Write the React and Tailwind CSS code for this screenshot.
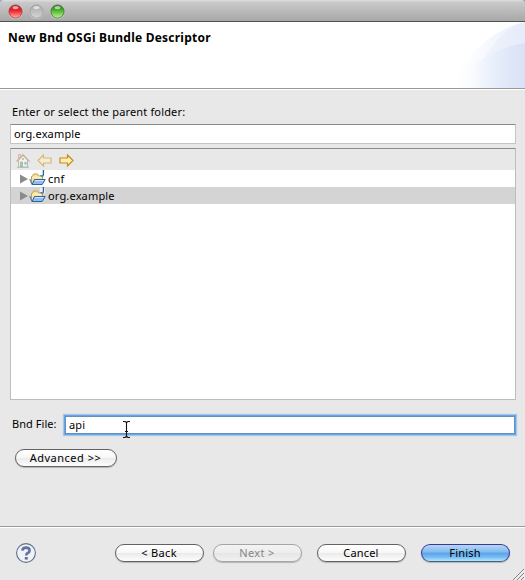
import React from "react";

const font = "font-['Noto_Sans',sans-serif]";

function Light({ id, edge, top, mid, low }) {
  return (
    <svg width="15" height="15" viewBox="0 0 15 15" className="block">
      <defs>
        <linearGradient id={id} x1="0" y1="0" x2="0" y2="1">
          <stop offset="0" stopColor={top} />
          <stop offset="0.45" stopColor={mid} />
          <stop offset="1" stopColor={low} />
        </linearGradient>
      </defs>
      <circle cx="7.5" cy="8" r="7.2" fill="#dedede" opacity="0.7" />
      <circle cx="7.5" cy="7.5" r="6.6" fill={`url(#${id})`} stroke={edge} strokeWidth="0.8" />
      <ellipse cx="7.5" cy="3.6" rx="3" ry="1.7" fill="#fff" opacity="0.6" />
    </svg>
  );
}

function HeaderArt() {
  return (
    <svg width="75" height="66" viewBox="0 0 75 66" className="block">
      <defs>
        <linearGradient id="wash" gradientUnits="userSpaceOnUse" x1="2" y1="0" x2="75" y2="0">
          <stop offset="0" stopColor="#fff" />
          <stop offset="0.3" stopColor="#fbfcff" />
          <stop offset="0.6" stopColor="#f3f6fd" />
          <stop offset="1" stopColor="#eaeffa" />
        </linearGradient>
        <linearGradient id="fold" gradientUnits="userSpaceOnUse" x1="32" y1="0" x2="75" y2="0">
          <stop offset="0" stopColor="#f0f4fc" />
          <stop offset="1" stopColor="#e5ebf9" />
        </linearGradient>
        <linearGradient id="wash2" gradientUnits="userSpaceOnUse" x1="6" y1="0" x2="75" y2="0">
          <stop offset="0" stopColor="#fff" />
          <stop offset="0.25" stopColor="#f9fbfe" />
          <stop offset="0.5" stopColor="#eaf0fb" />
          <stop offset="0.82" stopColor="#dde5f7" />
          <stop offset="1" stopColor="#dbe2f6" />
        </linearGradient>
      </defs>
      <path d="M2 66C12 38 38 8 75 0V66Z" fill="url(#wash)" />
      <path d="M32 40C42 22 55 6 75 0V40Z" fill="url(#fold)" />
      <path d="M2 66C18 43 44 26 75 21V66Z" fill="url(#wash2)" />
    </svg>
  );
}

function Home() {
  return (
    <svg width="14" height="15" viewBox="0 0 14 15" className="block">
      <path d="M2.5 1.5h2v4h-2z" fill="#ecd8cd" stroke="#cdb0a4" strokeWidth="0.8" />
      <path d="M2.5 7v7h9V7L7 2.5z" fill="#eef1ee" stroke="#b3bcb3" />
      <path d="M.5 8.5 7 1.8l6.5 6.7" fill="none" stroke="#cdb0a4" strokeWidth="1.3" />
      <path d="M6 5h2v2H6z" fill="#b8d0a0" />
      <path d="M4.5 9h2v5h-2z" fill="#a5ca80" stroke="#8fa39a" strokeWidth="0.5" />
      <path d="M8.5 9h2v2.5h-2z" fill="#8fb0cf" />
      <path d="M1 14.4h12" stroke="#b3c1b0" />
    </svg>
  );
}

function Arrow({ back }) {
  return (
    <svg width="15" height="13" viewBox="0 0 15 13" className="block">
      {back ? (
        <path d="M6.5 1 1 6.5 6.5 12V9h7.5V4H6.5z" fill="#f6ecd2" stroke="#d6b67a" strokeWidth="1.15" />
      ) : (
        <path d="M8.5 1 14 6.5 8.5 12V9H1V4h7.5z" fill="#ffefb5" stroke="#c68b16" strokeWidth="1.15" />
      )}
    </svg>
  );
}

function Folder() {
  return (
    <svg width="17" height="17" viewBox="0 0 17 17" className="block">
      <path d="M2.5 13.5V6.5h1L4.5 4h4l1 2h4v4" fill="#f9e3a0" stroke="#c79b4c" />
      <path d="M3.2 7.2h9.6" stroke="#fff3c8" />
      <path d="M.7 9 3 14.5" stroke="#3f73b3" />
      <path d="M3 14.5 5.5 9.5h10.7l-3 5z" fill="#8fbdec" stroke="#2d62a8" />
      <path d="M6 10.5h8.6" stroke="#d6e9ff" />
      <path d="M11 1h5v5.6h-5z" fill="#fff" opacity="0.7" />
      <path d="M14.4 0v4.4q0 1.7-1.4 1.7-.9 0-1.6-.6" fill="none" stroke="#246395" strokeWidth="1.3" />
    </svg>
  );
}

function Row({ name, selected }) {
  return (
    <div className={"flex h-[17px] items-center pl-[9px] " + (selected ? "bg-[#d4d4d4]" : "bg-white")}>
      <svg width="9" height="10" viewBox="0 0 9 10" className="block">
        <path d="M0 .5 8 5 0 9.5z" fill="#8b8b8b" />
      </svg>
      <Folder />
      <span className="ml-[2px] text-[11px] leading-[17px] tracking-[0.17px]">{name}</span>
    </div>
  );
}

function Button({ children, kind = "normal", className }) {
  const look =
    kind === "primary"
      ? "border-[#3b35a0] border-b-[#4b5c7c] bg-[linear-gradient(#b5d6f5_0%,#81b9ee_45%,#5aa3e8_50%,#75bbf3_75%,#b0eaff_100%)]"
      : kind === "disabled"
        ? "border-[#a5a5a5] text-[#858585] bg-[linear-gradient(#f3f3f3_0%,#ededed_50%,#e6e6e6_52%,#f1f1f1_100%)]"
        : "border-[#626262] bg-[linear-gradient(#ffffff_0%,#f7f7f7_48%,#ebebeb_52%,#fdfdfd_100%)]";
  return (
    <button
      className={
        "flex h-[18px] items-center justify-center rounded-full border text-[11px] leading-[16px] shadow-[0_1px_1px_rgba(0,0,0,0.22)] " +
        look + " " + className
      }
    >
      {children}
    </button>
  );
}

export default function App() {
  return (
    <div className={"relative flex h-[580px] w-[525px] flex-col overflow-hidden bg-[#e8e8e8] text-black " + font}>
      <div className="h-[22px] shrink-0 bg-[#8aa9d8]">
        <div className="flex h-[22px] items-center gap-[6px] rounded-t-[4px] border-b border-[#515151] bg-[linear-gradient(#dddddd_0%,#c9c9c9_12%,#a8a8a8_100%)] pl-[7.5px] pt-px">
          <Light id="close" edge="#a33d3d" top="#a82020" mid="#f0242c" low="#ffb8b0" />
          <Light id="minimize" edge="#989898" top="#acacac" mid="#bcbcbc" low="#d7d7d7" />
          <Light id="zoom" edge="#42723a" top="#26691c" mid="#4eb92e" low="#c5f29a" />
        </div>
      </div>

      <header className="flex h-[66px] shrink-0 justify-between bg-white">
        <h1 className="pl-[8px] pt-[8px] text-[12px] font-bold leading-[16px] tracking-[0.23px]">
          New Bnd OSGi Bundle Descriptor
        </h1>
        <HeaderArt />
      </header>
      <div className="h-[2px] shrink-0 border-t border-[#999999] bg-white" />

      <main className="flex flex-1 flex-col pl-[10px] pr-[9px] pt-[14px]">
        <label className="h-[20px] pl-[2px] text-[11px] leading-[16px] tracking-[0.16px]">
          <span>Enter or select the parent folder:</span>
        </label>
        <div className="flex h-[20px] items-center border border-[#c4c4c4] border-t-[#8b8b8b] bg-white pl-[3px] text-[11px] tracking-[0.17px]">
          <span>org.example</span>
        </div>
        <div className="mt-[4px] h-[252px] border border-[#bcbcbc] border-t-[#8b8b8b] bg-white">
          <div className="flex h-[21px] items-center gap-[7px] bg-[#e8e8e8] pl-[5px] pt-[2px]">
            <Home />
            <Arrow back />
            <Arrow />
          </div>
          <Row name="cnf" />
          <Row name="org.example" selected />
        </div>
        <div className="mt-[15px] flex h-[19px] items-center pl-[2px] pr-px">
          <span className="w-[54px] whitespace-nowrap text-[11px] tracking-[0.05px]">Bnd File:</span>
          <div className="-ml-px flex h-[18px] flex-1 items-center border border-[#5e91c9] bg-white pl-[3px] pt-px text-[11px] tracking-[0.17px] shadow-[0_0_0_1px_#6aa5e0,0_0_1px_2px_#a3c6ea]">
            <span>api</span>
          </div>
        </div>
        <div className="mt-[15px] pl-[4.5px]">
          <Button className="w-[102px] tracking-[0.5px]">Advanced &gt;&gt;</Button>
        </div>
      </main>

      <footer className="h-[54px] shrink-0 border-t border-[#999999]">
        <div className="flex h-[53px] items-start border-t border-white pl-[16px] pt-[16px]">
          <svg width="21" height="21" viewBox="0 0 21 21" className="-mt-px block">
            <circle cx="10" cy="10" r="9.4" fill="#f1f2f5" stroke="#60708f" strokeWidth="1.1" />
            <path d="M6.4 7.6q.2-3 3.7-3 3.5 0 3.5 2.8 0 1.5-1.8 2.6-1.6.9-1.6 2.5" fill="none" stroke="#60739e" strokeWidth="2.6" />
            <path d="M8.8 14h3v2.6h-3z" fill="#60739e" />
          </svg>
          <Button className="ml-[77.5px] w-[89px] tracking-[0.35px]">&lt; Back</Button>
          <Button kind="disabled" className="ml-[9px] w-[89px] tracking-[0.35px]">Next &gt;</Button>
          <Button className="ml-[15px] w-[89px] tracking-[0.17px]">Cancel</Button>
          <Button kind="primary" className="ml-[15px] w-[89px] tracking-[0.17px]">Finish</Button>
        </div>
      </footer>

      <svg width="11" height="11" viewBox="0 0 11 11" className="absolute bottom-0 right-[1px]">
        <path d="M0 11 11 0M4 11l7-7M8 11l3-3" stroke="#858585" strokeWidth="1" />
        <path d="M1 11.5 11.5 1M5 11.5 11.5 5" stroke="#fff" strokeWidth="0.5" />
      </svg>
      <svg width="9" height="17" viewBox="0 0 9 17" className="absolute left-[122px] top-[421px]">
        <path d="M1 .5h1.5Q4 .5 4.5 2 5 .5 6.5.5H8M4.5 2v13M1 16.5h1.5Q4 16.5 4.5 15q.5 1.5 2 1.5H8M3 10.5h3" fill="none" stroke="#111" strokeWidth="1.1" />
      </svg>
    </div>
  );
}
